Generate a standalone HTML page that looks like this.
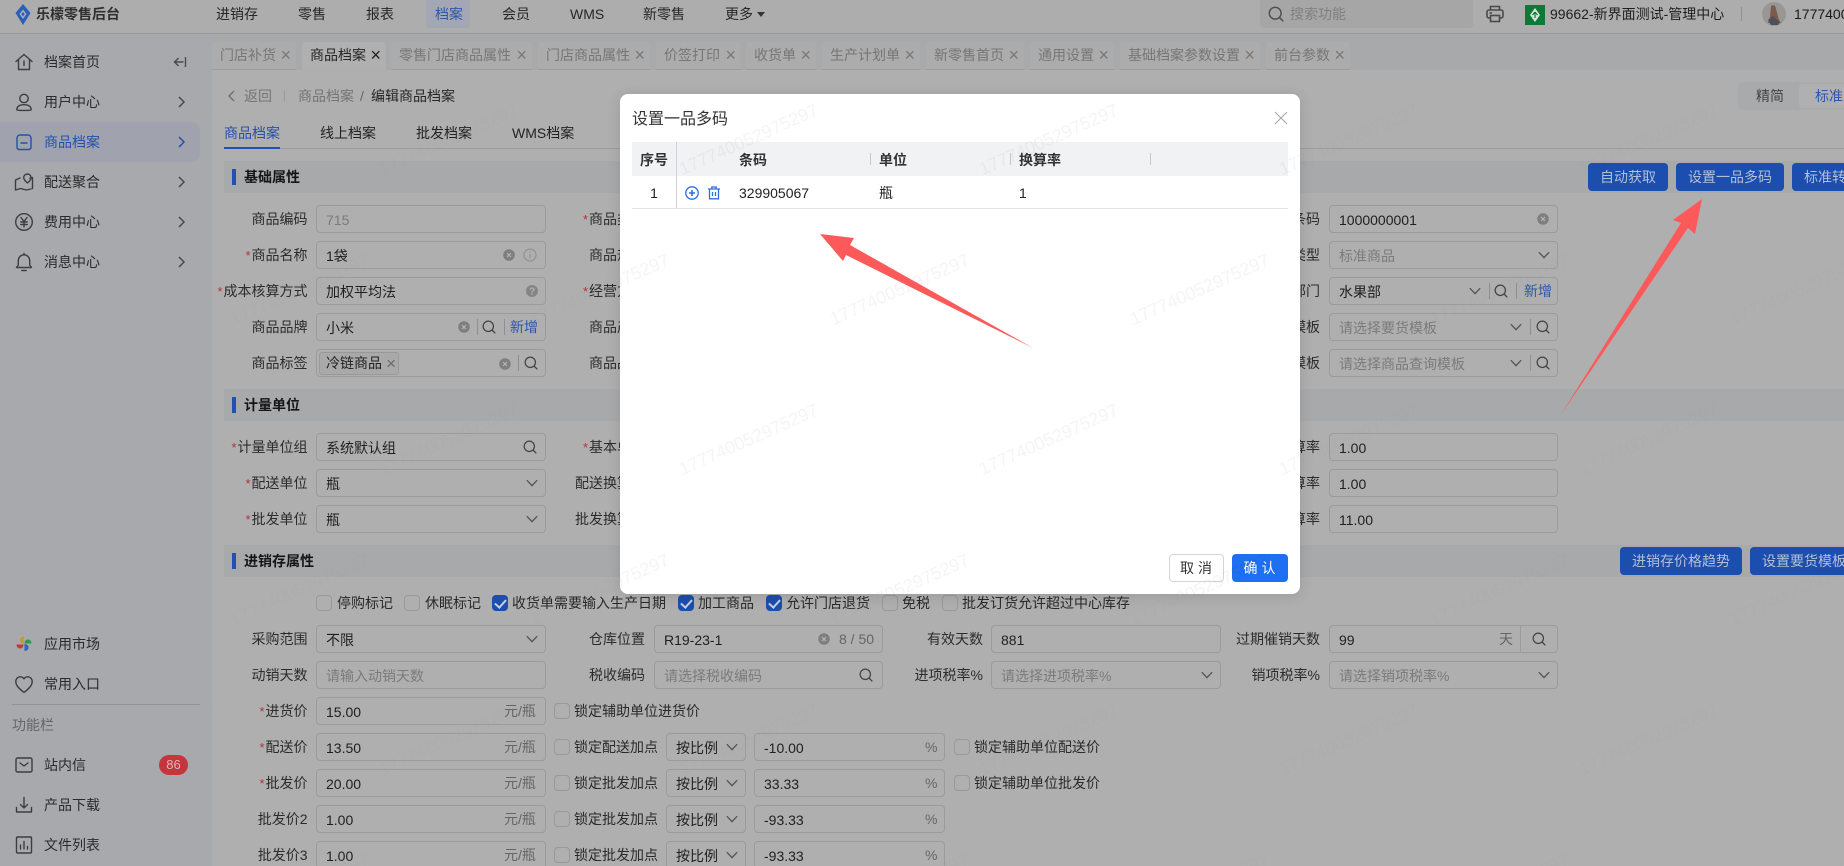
<!DOCTYPE html>
<html lang="zh"><head><meta charset="utf-8"><title>编辑商品档案</title>
<style>
html,body{margin:0;padding:0;width:1844px;height:866px;overflow:hidden;background:#afafaf}
body{position:relative;font:14px/20px "Liberation Sans","Noto Sans CJK SC",sans-serif;color:#222}
div,span,svg{box-sizing:border-box}
.a{position:absolute;white-space:nowrap}
.top{position:absolute;left:0;top:0;width:1844px;height:34px;background:#adadad;border-bottom:1px solid #989898}
.nav{position:absolute;top:4px;white-space:nowrap;color:#262626}
.side{position:absolute;left:0;top:34px;width:212px;height:832px;background:#a8a9ac}
.si{position:absolute;left:44px;white-space:nowrap;color:#2b2b2b}
.ic{position:absolute;left:14px;width:20px;height:20px;color:#3d3d40;fill:none;stroke:currentColor;stroke-width:1.4;stroke-linecap:round;stroke-linejoin:round}
.ch{position:absolute;left:175px;width:12px;height:14px;fill:none;stroke:#4a4a4c;stroke-width:1.5}
.tabbar{position:absolute;left:212px;top:34px;width:1632px;height:36px;background:#a8a9ab}
.tab{position:absolute;top:42px;height:28px;background:#acacac;border-bottom:1px solid #9d9d9d;border-radius:4px 4px 0 0;color:#767676;line-height:27px;padding-left:8px;white-space:nowrap}
.tab b{position:absolute;right:5px;top:0;font-weight:400;font-size:18px;color:#787878}
.sec{position:absolute;left:224px;width:1620px;height:32px;background:#a8a9ab}
.sec i{position:absolute;left:8px;top:8px;width:4px;height:16px;background:#2050b0}
.sec span{position:absolute;left:20px;top:5px;font-weight:700;color:#151515;line-height:22px;white-space:nowrap}
.btn{position:absolute;height:28px;background:#1b4eae;border-radius:4px;color:#b4bfd6;line-height:28px;text-align:center;white-space:nowrap;overflow:hidden}
.row{position:absolute;left:0;width:1844px;height:28px}
.lb{position:absolute;top:0;line-height:29px;text-align:right;white-space:nowrap;color:#2c2c2c}
.lb em{font-style:normal;color:#b0343a;font-size:13px;margin-right:1px}
.c1{left:100px;width:207.5px}.c2{left:400px;width:245px}.c3{left:800px;width:183px}.c4{left:1100px;width:220px}
.in{position:absolute;top:0;height:28px;border:1px solid #9b9b9b;border-radius:4px;line-height:28px;padding-left:9px;white-space:nowrap;color:#1f1f1f}
.w1{left:316px;width:230px}.w2{left:654px;width:229px}.w3{left:991px;width:230px}.w4{left:1329px;width:229px}
.ph{color:#7b7b7b}
.x{position:absolute;top:0;line-height:28px;white-space:nowrap;color:#2a2a2a}
.g{color:#666}
.bl{color:#2c55ad}
.i{position:absolute;top:7px;width:14px;height:14px;color:#434343}
.sp{position:absolute;top:6px;width:1px;height:16px;background:#8f8f8f}
.cb{position:absolute;top:6px;width:16px;height:16px;border:1px solid #999;border-radius:4px}
.cb.on{background:#1b4eae;border-color:#1b4eae}
.cb.on:after{content:"";position:absolute;left:4px;top:1px;width:5px;height:9px;border:solid #c7cfe0;border-width:0 2px 2px 0;transform:rotate(42deg)}
.modal{position:absolute;left:620px;top:94px;width:680px;height:500px;background:#fff;border-radius:8px;box-shadow:0 2px 14px rgba(0,0,0,.12)}
.th{position:absolute;top:48px;height:34px;line-height:36px;font-weight:700;color:#333;white-space:nowrap}
.td{position:absolute;top:82px;height:32px;line-height:35px;color:#222;white-space:nowrap}
.tsp{position:absolute;top:59px;width:1px;height:12px;background:#c4c6cb}
</style></head><body>
<svg width="0" height="0" style="position:absolute"><defs>
<symbol id="s" viewBox="0 0 16 16"><circle cx="7.2" cy="7.2" r="5.9" fill="none" stroke="currentColor" stroke-width="1.4"/><path d="M11.6 11.6L14.8 14.8" fill="none" stroke="currentColor" stroke-width="1.5" stroke-linecap="round"/></symbol>
<symbol id="d" viewBox="0 0 16 16"><path d="M2.5 5.2L8 11l5.5-5.8" fill="none" stroke="currentColor" stroke-width="1.5" stroke-linecap="round"/></symbol>
<symbol id="c" viewBox="0 0 16 16"><circle cx="8" cy="8" r="6.6" fill="#7f7f7f"/><path d="M5.8 5.8l4.4 4.4M10.2 5.8l-4.4 4.4" stroke="#b5b5b5" stroke-width="1.3"/></symbol>
<symbol id="r" viewBox="0 0 12 14"><path d="M4 2l5 5-5 5" fill="none"/></symbol>
</defs></svg>

<!-- Top bar -->
<div class="top">
<svg class="a" style="left:15px;top:4px;width:16px;height:21px" viewBox="0 0 16 21"><path d="M8 0l7.5 9L8 21 .5 9z" fill="#2a5fbc"/><path d="M8 5.5L11.5 10 8 15 4.5 10z" fill="#adadad"/><path d="M8 8L9.7 10 8 12.5 6.3 10z" fill="#2a5fbc"/></svg>
<div class="a" style="left:36px;top:4px;font-weight:700;color:#2f2f2f">乐檬零售后台</div>
<div class="nav" style="left:216px">进销存</div>
<div class="nav" style="left:298px">零售</div>
<div class="nav" style="left:366px">报表</div>
<div class="a" style="left:426px;top:0;width:44px;height:28px;background:#a3a7b3;border-radius:0 0 4px 4px"></div>
<div class="nav" style="left:435px;color:#2f56a8">档案</div>
<div class="nav" style="left:502px">会员</div>
<div class="nav" style="left:570px">WMS</div>
<div class="nav" style="left:643px">新零售</div>
<div class="nav" style="left:725px">更多</div>
<div class="a" style="left:757px;top:12px;width:0;height:0;border:4px solid transparent;border-top:5px solid #333;border-bottom:0"></div>
<div class="a" style="left:1260px;top:0;width:213px;height:28px;background:#a6a6a7;border-radius:0 0 4px 4px"></div>
<svg class="a" style="left:1268px;top:6px;width:16px;height:16px;color:#4e4e4e"><use href="#s"/></svg>
<div class="a ph" style="left:1290px;top:4px;color:#808080">搜索功能</div>
<svg class="a" style="left:1486px;top:5px;width:18px;height:18px" viewBox="0 0 18 18" fill="none" stroke="#4a4a4a" stroke-width="1.6"><path d="M4.5 5V1.5h9V5"/><rect x="1" y="5" width="16" height="8" rx="2"/><rect x="4.5" y="10.5" width="9" height="6" fill="#adadad"/><path d="M3.5 8h2.5"/></svg>
<div class="a" style="left:1525px;top:5px;width:20px;height:20px;background:#0c7a36"></div>
<svg class="a" style="left:1528px;top:7px;width:14px;height:16px" viewBox="0 0 14 16"><path d="M7 1l5 7-5 7-5-7z" fill="#d9e6d6"/><path d="M7 5v6M7 5L4.5 8M7 5l2.5 3" stroke="#0c7a36" stroke-width="1.2" fill="none"/></svg>
<div class="a" style="left:1550px;top:4px;color:#1f1f1f">99662-新界面测试-管理中心</div>
<div class="a" style="left:1741px;top:7px;width:1px;height:14px;background:#8e8e8e"></div>
<svg class="a" style="left:1762px;top:2px;width:24px;height:24px" viewBox="0 0 24 24"><circle cx="12" cy="12" r="12" fill="#9a9696"/><path d="M9 4c3-2 5 0 5 3l3 11 2 3H6l2-6z" fill="#7a5c4c"/><path d="M6 18l5-4 3 3 4 3-2 3H9z" fill="#4d5058"/></svg>
<div class="a" style="left:1794px;top:4px;color:#1a1a1a">17774005297</div>
</div>

<!-- Sidebar -->
<div class="side"></div>
<div class="a" style="left:0;top:122px;width:200px;height:40px;background:#a0a3ad;border-radius:0 8px 8px 0"></div>
<svg class="ic" style="top:52px" viewBox="0 0 20 20"><path d="M2 9.5L10 2.5l8 7M4.5 8v9.5h11V8M10 9v4.5"/></svg>
<div class="si" style="top:52px">档案首页</div>
<svg class="a" style="left:173px;top:55px;width:14px;height:14px" viewBox="0 0 14 14" fill="none" stroke="#4a4a4c" stroke-width="1.4"><path d="M12.5 2v10M10.5 7H1.5M5.5 3l-4 4 4 4"/></svg>
<svg class="ic" style="top:92px" viewBox="0 0 20 20"><circle cx="10" cy="6.5" r="4.2"/><path d="M2.8 18c0-3.6 2.5-5.3 7.2-5.3s7.2 1.7 7.2 5.3c0 .6-14.4.6-14.4 0z"/></svg>
<div class="si" style="top:92px">用户中心</div>
<svg class="ch" style="top:95px"><use href="#r"/></svg>
<svg class="ic" style="top:132px;color:#2450ab" viewBox="0 0 20 20"><path d="M3 6.5c0-2 1-3.5 3-3.5h8c2 0 3 1.500 3 3.500V15c0 1.500-.8 2.500-2.500 2.500h-9C3.800 17.500 3 16.500 3 15zM7 11h6"/></svg>
<div class="si" style="top:132px;color:#2450ab">商品档案</div>
<svg class="ch" style="top:135px;stroke:#2450ab"><use href="#r"/></svg>
<svg class="ic" style="top:172px" viewBox="0 0 20 20"><path d="M6 6L1.500 8v10l5-1.500 6 1.500 6-1.500V5.500l-2.500.7M13.500 2c-2.300 0-3.800 1.700-3.800 3.600 0 2.200 3.800 5.400 3.800 5.400s3.500-3 3.500-5.400C17 3.700 15.700 2 13.500 2z"/></svg>
<div class="si" style="top:172px">配送聚合</div>
<svg class="ch" style="top:175px"><use href="#r"/></svg>
<svg class="ic" style="top:212px" viewBox="0 0 20 20"><circle cx="10" cy="10" r="8.300"/><path d="M7 5.500L10 9.500l3-4M6.800 10h6.400M6.800 12.500h6.400M10 9.500v5.500"/></svg>
<div class="si" style="top:212px">费用中心</div>
<svg class="ch" style="top:215px"><use href="#r"/></svg>
<svg class="ic" style="top:252px" viewBox="0 0 20 20"><path d="M2.500 15.500h15l-1.800-2.500V8.500a5.700 5.700 0 0 0-11.400 0V13zM10 1.500v1.300M7.800 18.500h4.400"/></svg>
<div class="si" style="top:252px">消息中心</div>
<svg class="ch" style="top:255px"><use href="#r"/></svg>

<svg class="a" style="left:15px;top:635px;width:18px;height:18px" viewBox="0 0 18 18"><path d="M9 8.500V1.500c-3 0-4 2-4 4 0 1.500 1.500 3 4 3z" fill="#c59a2e"/><path d="M9.500 8.500h7c0-3-2-4-4-4-1.500 0-3 1.500-3 4z" fill="#2f9a4c"/><path d="M9.500 9v7c3 0 4-2 4-4 0-1.500-1.500-3-4-3z" fill="#2f64b8"/><path d="M8.500 9.500h-7c0 3 2 4 4 4 1.500 0 3-1.500 3-4z" fill="#c03a3a"/></svg>
<div class="si" style="top:634px">应用市场</div>
<svg class="ic" style="top:674px" viewBox="0 0 20 20"><path d="M10 18.500C5 14.500 1.800 11.500 1.800 7.500c0-2.800 2.100-4.700 4.500-4.700 1.600 0 2.900.8 3.700 2 .8-1.200 2.100-2 3.700-2 2.400 0 4.500 1.900 4.500 4.700 0 4-3.200 7-8.200 11z"/></svg>
<div class="si" style="top:674px">常用入口</div>
<div class="a" style="left:12px;top:704px;width:188px;height:1px;background:#929396"></div>
<div class="a" style="left:12px;top:715px;color:#666">功能栏</div>
<svg class="ic" style="top:755px" viewBox="0 0 20 20"><rect x="2" y="3" width="16" height="14" rx="1.500"/><path d="M6 8l4 3 4-3"/></svg>
<div class="si" style="top:755px">站内信</div>
<div class="a" style="left:159px;top:755px;width:29px;height:20px;background:#c4363c;border-radius:10px;color:#d9b7b8;line-height:20px;text-align:center;font-size:13px">86</div>
<svg class="ic" style="top:795px" viewBox="0 0 20 20"><path d="M10 2.500v10M6.500 9.500l3.500 3.500 3.500-3.500M2.500 12.500v4.500h15v-4.500"/></svg>
<div class="si" style="top:795px">产品下载</div>
<svg class="ic" style="top:835px" viewBox="0 0 20 20"><rect x="2.500" y="2" width="15" height="16" rx="1"/><path d="M6.500 14V10M10 14V6.500M13.500 14v-2.500"/></svg>
<div class="si" style="top:835px">文件列表</div>

<!-- Tabs -->
<div class="tabbar"></div>
<div class="tab" style="left:212px;width:84px">门店补货<b>×</b></div>
<div class="tab" style="left:302px;width:84px;background:#b0b0b0;color:#262626;border-bottom-color:#b0b0b0">商品档案<b style="color:#222">×</b></div>
<div class="tab" style="left:391px;width:141px">零售门店商品属性<b>×</b></div>
<div class="tab" style="left:538px;width:112px">门店商品属性<b>×</b></div>
<div class="tab" style="left:656px;width:85px">价签打印<b>×</b></div>
<div class="tab" style="left:746px;width:70px">收货单<b>×</b></div>
<div class="tab" style="left:822px;width:98px">生产计划单<b>×</b></div>
<div class="tab" style="left:926px;width:98px">新零售首页<b>×</b></div>
<div class="tab" style="left:1030px;width:84px">通用设置<b>×</b></div>
<div class="tab" style="left:1120px;width:140px">基础档案参数设置<b>×</b></div>
<div class="tab" style="left:1266px;width:84px">前台参数<b>×</b></div>

<!-- Breadcrumb -->
<svg class="a" style="left:227px;top:90px;width:9px;height:12px" viewBox="0 0 9 12"><path d="M7 1L2 6l5 5" fill="none" stroke="#6d6d6d" stroke-width="1.300"/></svg>
<div class="a g" style="left:244px;top:86px;color:#757575">返回</div>
<div class="a" style="left:284px;top:90px;width:1px;height:12px;background:#9a9a9a"></div>
<div class="a" style="left:298px;top:86px;color:#757575">商品档案</div>
<div class="a" style="left:360px;top:86px;color:#666">/</div>
<div class="a" style="left:371px;top:86px;color:#262626">编辑商品档案</div>
<div class="a" style="left:1738px;top:82px;width:106px;height:28px;background:#a9aaac;border-radius:4px 0 0 4px"></div>
<div class="a" style="left:1799px;top:84px;width:45px;height:24px;background:#b0b0b0;border-radius:4px 0 0 4px"></div>
<div class="a" style="left:1756px;top:86px;color:#444">精简</div>
<div class="a bl" style="left:1815px;top:86px">标准</div>

<!-- Sub tabs -->
<div class="a" style="left:224px;top:148px;width:1620px;height:1px;background:#9c9c9c"></div>
<div class="a" style="left:224px;top:147px;width:56px;height:2px;background:#2050b0"></div>
<div class="a" style="left:224px;top:123px;color:#2450ab">商品档案</div>
<div class="a" style="left:320px;top:123px">线上档案</div>
<div class="a" style="left:416px;top:123px">批发档案</div>
<div class="a" style="left:512px;top:123px">WMS档案</div>

<!-- Section 1 -->
<div class="sec" style="top:161px"><i></i><span>基础属性</span></div>
<div class="btn" style="left:1588px;top:163px;width:80px">自动获取</div>
<div class="btn" style="left:1676px;top:163px;width:108px">设置一品多码</div>
<div class="btn" style="left:1792px;top:163px;width:80px;border-radius:4px 0 0 4px;text-align:left;padding-left:12px">标准转换</div>

<div class="row" style="top:205px">
<div class="lb c1">商品编码</div><div class="in w1 ph">715</div>
<div class="lb c2"><em>*</em>商品类别</div><div class="in w2"></div>
<div class="lb c4">商品条码</div><div class="in w4">1000000001</div>
<svg class="i" style="left:1536px"><use href="#c"/></svg>
</div>
<div class="row" style="top:241px">
<div class="lb c1"><em>*</em>商品名称</div><div class="in w1">1袋</div>
<svg class="i" style="left:502px"><use href="#c"/></svg>
<svg class="i" style="left:523px;color:#888" viewBox="0 0 14 14"><circle cx="7" cy="7" r="6" fill="none" stroke="#8c8c8c"/><path d="M7 6v4.500M7 3.500v1.200" stroke="#8c8c8c"/></svg>
<div class="lb c2">商品规格</div>
<div class="lb c4">商品类型</div><div class="in w4 ph">标准商品</div>
<svg class="i" style="left:1537px;color:#555"><use href="#d"/></svg>
</div>
<div class="row" style="top:277px">
<div class="lb c1"><em>*</em>成本核算方式</div><div class="in w1">加权平均法</div>
<svg class="i" style="left:525px" viewBox="0 0 14 14"><circle cx="7" cy="7" r="6" fill="#858585"/><text x="7" y="10.500" font-size="10" text-anchor="middle" fill="#b0b0b0" font-family="Liberation Sans" font-weight="700">?</text></svg>
<div class="lb c2"><em>*</em>经营方式</div>
<div class="lb c4">所属部门</div><div class="in w4">水果部</div>
<svg class="i" style="left:1468px;color:#555"><use href="#d"/></svg><span class="sp" style="left:1489px"></span>
<svg class="i" style="left:1494px"><use href="#s"/></svg><span class="sp" style="left:1516px"></span>
<div class="x bl" style="left:1524px">新增</div>
</div>
<div class="row" style="top:313px">
<div class="lb c1">商品品牌</div><div class="in w1">小米</div>
<svg class="i" style="left:457px"><use href="#c"/></svg><span class="sp" style="left:477px"></span>
<svg class="i" style="left:482px"><use href="#s"/></svg><span class="sp" style="left:504px"></span>
<div class="x bl" style="left:510px">新增</div>
<div class="lb c2">商品产地</div>
<div class="lb c4">要货模板</div><div class="in w4 ph">请选择要货模板</div>
<svg class="i" style="left:1509px;color:#555"><use href="#d"/></svg><span class="sp" style="left:1530px"></span>
<svg class="i" style="left:1536px"><use href="#s"/></svg>
</div>
<div class="row" style="top:349px">
<div class="lb c1">商品标签</div><div class="in w1"></div>
<div class="a" style="left:319px;top:3px;width:80px;height:23px;border:1px solid #999;border-radius:3px;background:#a9a9a9;line-height:21px;padding-left:6px;color:#222">冷链商品<span style="position:absolute;right:2px;top:0;color:#6a6a6a;font-size:17px">×</span></div>
<svg class="i" style="left:498px;top:8px"><use href="#c"/></svg><span class="sp" style="left:518px"></span>
<svg class="i" style="left:524px"><use href="#s"/></svg>
<div class="lb c2">商品品类</div>
<div class="lb c4">查询模板</div><div class="in w4 ph">请选择商品查询模板</div>
<svg class="i" style="left:1509px;color:#555"><use href="#d"/></svg><span class="sp" style="left:1530px"></span>
<svg class="i" style="left:1536px"><use href="#s"/></svg>
</div>

<!-- Section 2 -->
<div class="sec" style="top:389px"><i></i><span>计量单位</span></div>
<div class="row" style="top:433px">
<div class="lb c1"><em>*</em>计量单位组</div><div class="in w1">系统默认组</div>
<svg class="i" style="left:523px"><use href="#s"/></svg>
<div class="lb c2"><em>*</em>基本单位</div>
<div class="lb c4">采购换算率</div><div class="in w4">1.00</div>
</div>
<div class="row" style="top:469px">
<div class="lb c1"><em>*</em>配送单位</div><div class="in w1">瓶</div>
<svg class="i" style="left:525px;color:#555"><use href="#d"/></svg>
<div class="lb c2">配送换算率</div>
<div class="lb c4">配送换算率</div><div class="in w4">1.00</div>
</div>
<div class="row" style="top:505px">
<div class="lb c1"><em>*</em>批发单位</div><div class="in w1">瓶</div>
<svg class="i" style="left:525px;color:#555"><use href="#d"/></svg>
<div class="lb c2">批发换算率</div>
<div class="lb c4">批发换算率</div><div class="in w4">11.00</div>
</div>

<!-- Section 3 -->
<div class="sec" style="top:545px"><i></i><span>进销存属性</span></div>
<div class="btn" style="left:1620px;top:547px;width:122px">进销存价格趋势</div>
<div class="btn" style="left:1750px;top:547px;width:94px;border-radius:4px 0 0 4px;text-align:left;padding-left:12px">设置要货模板</div>

<div class="row" style="top:589px">
<span class="cb" style="left:316px"></span><div class="x" style="left:337px">停购标记</div>
<span class="cb" style="left:404px"></span><div class="x" style="left:425px">休眠标记</div>
<span class="cb on" style="left:492px"></span><div class="x" style="left:512px">收货单需要输入生产日期</div>
<span class="cb on" style="left:678px"></span><div class="x" style="left:698px">加工商品</div>
<span class="cb on" style="left:766px"></span><div class="x" style="left:786px">允许门店退货</div>
<span class="cb" style="left:882px"></span><div class="x" style="left:902px">免税</div>
<span class="cb" style="left:942px"></span><div class="x" style="left:962px">批发订货允许超过中心库存</div>
</div>

<div class="row" style="top:625px">
<div class="lb c1">采购范围</div><div class="in w1">不限</div>
<svg class="i" style="left:525px;color:#555"><use href="#d"/></svg>
<div class="lb c2">仓库位置</div><div class="in w2">R19-23-1</div>
<svg class="i" style="left:817px"><use href="#c"/></svg>
<div class="x g" style="left:839px">8 / 50</div>
<div class="lb c3">有效天数</div><div class="in w3">881</div>
<div class="lb c4">过期催销天数</div><div class="in w4">99</div>
<div class="x g" style="left:1499px">天</div><span class="a" style="left:1520px;top:0;width:1px;height:28px;background:#9b9b9b"></span>
<svg class="i" style="left:1532px"><use href="#s"/></svg>
</div>
<div class="row" style="top:661px">
<div class="lb c1">动销天数</div><div class="in w1 ph">请输入动销天数</div>
<div class="lb c2">税收编码</div><div class="in w2 ph">请选择税收编码</div>
<svg class="i" style="left:859px"><use href="#s"/></svg>
<div class="lb c3">进项税率%</div><div class="in w3 ph">请选择进项税率%</div>
<svg class="i" style="left:1200px;color:#555"><use href="#d"/></svg>
<div class="lb c4">销项税率%</div><div class="in w4 ph">请选择销项税率%</div>
<svg class="i" style="left:1537px;color:#555"><use href="#d"/></svg>
</div>
<div class="row" style="top:697px">
<div class="lb c1"><em>*</em>进货价</div><div class="in w1">15.00</div><div class="x g" style="left:504px">元/瓶</div>
<span class="cb" style="left:554px"></span><div class="x" style="left:574px">锁定辅助单位进货价</div>
</div>
<div class="row" style="top:733px">
<div class="lb c1"><em>*</em>配送价</div><div class="in w1">13.50</div><div class="x g" style="left:504px">元/瓶</div>
<span class="cb" style="left:554px"></span><div class="x" style="left:574px">锁定配送加点</div>
<div class="in" style="left:666px;width:80px">按比例</div><svg class="i" style="left:725px;color:#555"><use href="#d"/></svg>
<div class="in" style="left:754px;width:191px">-10.00</div><div class="x g" style="left:925px">%</div>
<span class="cb" style="left:954px"></span><div class="x" style="left:974px">锁定辅助单位配送价</div>
</div>
<div class="row" style="top:769px">
<div class="lb c1"><em>*</em>批发价</div><div class="in w1">20.00</div><div class="x g" style="left:504px">元/瓶</div>
<span class="cb" style="left:554px"></span><div class="x" style="left:574px">锁定批发加点</div>
<div class="in" style="left:666px;width:80px">按比例</div><svg class="i" style="left:725px;color:#555"><use href="#d"/></svg>
<div class="in" style="left:754px;width:191px">33.33</div><div class="x g" style="left:925px">%</div>
<span class="cb" style="left:954px"></span><div class="x" style="left:974px">锁定辅助单位批发价</div>
</div>
<div class="row" style="top:805px">
<div class="lb c1">批发价2</div><div class="in w1">1.00</div><div class="x g" style="left:504px">元/瓶</div>
<span class="cb" style="left:554px"></span><div class="x" style="left:574px">锁定批发加点</div>
<div class="in" style="left:666px;width:80px">按比例</div><svg class="i" style="left:725px;color:#555"><use href="#d"/></svg>
<div class="in" style="left:754px;width:191px">-93.33</div><div class="x g" style="left:925px">%</div>
</div>
<div class="row" style="top:841px">
<div class="lb c1">批发价3</div><div class="in w1">1.00</div><div class="x g" style="left:504px">元/瓶</div>
<span class="cb" style="left:554px"></span><div class="x" style="left:574px">锁定批发加点</div>
<div class="in" style="left:666px;width:80px">按比例</div><svg class="i" style="left:725px;color:#555"><use href="#d"/></svg>
<div class="in" style="left:754px;width:191px">-93.33</div><div class="x g" style="left:925px">%</div>
</div>

<!-- Modal -->
<div class="modal">
<div class="a" style="left:12px;top:15px;font-size:16px;line-height:22px;color:#333">设置一品多码</div>
<svg class="a" style="left:654px;top:17px;width:14px;height:14px" viewBox="0 0 14 14"><path d="M1 1l12 12M13 1L1 13" stroke="#a8a8a8" stroke-width="1.100"/></svg>
<div class="a" style="left:12px;top:48px;width:656px;height:34px;background:#f1f2f4"></div>
<div class="a" style="left:12px;top:114px;width:656px;height:1px;background:#e3e4e6"></div>
<div class="a" style="left:56px;top:48px;width:1px;height:66px;background:#d0d1d4"></div>
<div class="th" style="left:12px;width:44px;text-align:center">序号</div>
<div class="th" style="left:119px">条码</div><span class="tsp" style="left:250px"></span>
<div class="th" style="left:259px">单位</div><span class="tsp" style="left:390px"></span>
<div class="th" style="left:399px">换算率</div><span class="tsp" style="left:530px"></span>
<div class="td" style="left:12px;width:44px;text-align:center">1</div>
<svg class="a" style="left:65px;top:92px;width:14px;height:14px" viewBox="0 0 14 14" fill="none" stroke="#2a6fe0" stroke-width="1.300"><circle cx="7" cy="7" r="6.200"/><path d="M7 4v6M4 7h6" stroke-width="1.600"/></svg>
<svg class="a" style="left:87px;top:92px;width:14px;height:14px" viewBox="0 0 14 14" fill="none" stroke="#2a6fe0" stroke-width="1.300"><path d="M1 3h12M4.800 3V1h4.400v2M2.500 3v9.800h9V3M5.500 6v4M8.500 6v4"/></svg>
<div class="td" style="left:119px">329905067</div>
<div class="td" style="left:259px">瓶</div>
<div class="td" style="left:399px">1</div>
<div class="a" style="left:549px;top:460px;width:55px;height:28px;border:1px solid #d4d5d8;border-radius:4px;text-align:center;line-height:26px;color:#333;letter-spacing:4px;padding-left:3px">取消</div>
<div class="a" style="left:612px;top:460px;width:56px;height:28px;background:#1f6ff2;border-radius:4px;text-align:center;line-height:28px;color:#fff;letter-spacing:4px;padding-left:3px">确认</div>
</div>

<!-- Watermark -->
<svg class="a" style="left:0;top:0;width:1844px;height:866px;pointer-events:none" viewBox="0 0 1844 866">
<defs><pattern id="wm" width="300" height="300" patternUnits="userSpaceOnUse" patternTransform="translate(73 103)">
<text transform="translate(78 42) rotate(-24)" text-anchor="middle" font-family="Liberation Sans" font-size="18" fill="#000" fill-opacity=".05">177740052975297</text>
<text transform="translate(229 192) rotate(-24)" text-anchor="middle" font-family="Liberation Sans" font-size="18" fill="#000" fill-opacity=".05">177740052975297</text>
</pattern></defs>
<rect x="212" y="70" width="1632" height="796" fill="url(#wm)" opacity=".25"/>
<rect x="620" y="94" width="680" height="500" rx="8" fill="url(#wm)" opacity=".55"/>
</svg>

<!-- Arrows -->
<svg class="a" style="left:0;top:0;width:1844px;height:866px;pointer-events:none" viewBox="0 0 1844 866">
<path d="M820 234L854 238L850 245L1033 348L846 255L843 261Z" fill="#fc5a5a"/>
<path d="M1702 199L1673 220L1681 223L1560 416L1688 228L1695 234Z" fill="#fc5a5a"/>
</svg>
</body></html>
